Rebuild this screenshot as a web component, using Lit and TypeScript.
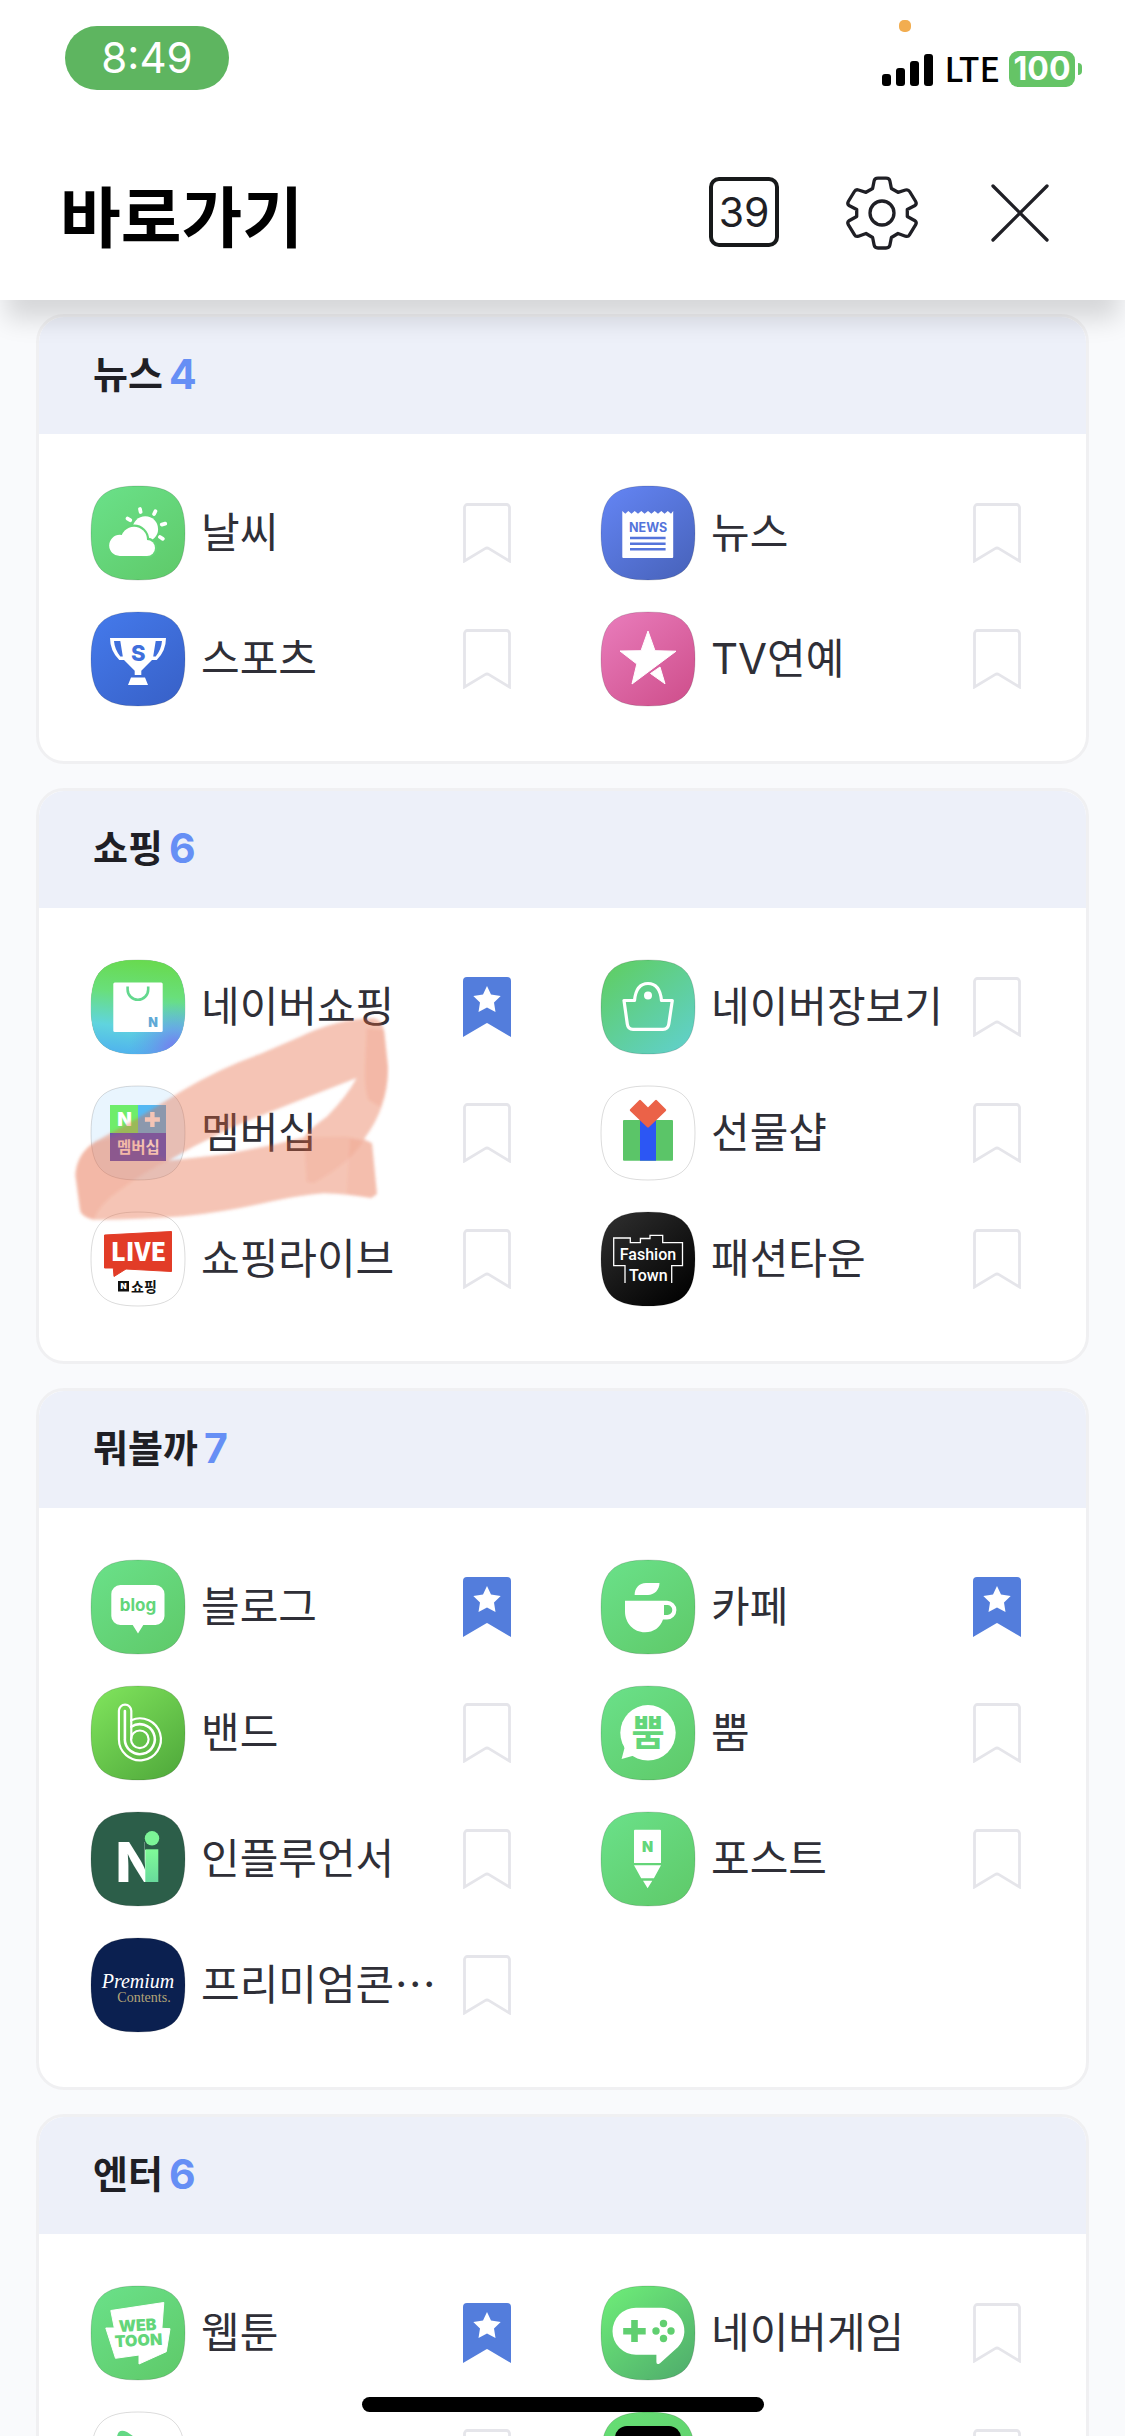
import { LitElement, html, svg, css, nothing, TemplateResult } from "lit";
import { customElement, property, state } from "lit/decorators.js";
import { classMap } from "lit/directives/class-map.js";

const SQUIRCLE = "M48 1C83 1 95 13 95 48S83 95 48 95 1 83 1 48 13 1 48 1Z";
const LEAF: [string, string] = ["#6ae088", "#5fca6a"];

interface Tile {
  colors: [string, string];
  art: TemplateResult;
}

/* Artwork of every service tile, drawn on a 96 x 96 grid. */
const TILES: Record<string, Tile> = {
  weather: {
    colors: LEAF,
    art: svg`
      <circle cx="55.3" cy="44" r="12.8" fill="#fff" />
      <g fill="#65d678">
        <circle cx="44" cy="54.8" r="15.2" />
        <circle cx="57" cy="62.8" r="10.2" />
      </g>
      <g fill="#fff">
        <circle cx="29.8" cy="60.4" r="10.6" />
        <circle cx="44" cy="54.8" r="13" />
        <circle cx="57" cy="63" r="8" />
        <rect x="29.8" y="58" width="27.2" height="13" />
      </g>
      <path d="M50 24l.6 3M65.4 26.3l-1.3 2.7M71.8 39.6l3.4-.9M70 52l2.8 1.8M37.6 33.6l2.6 1.6"
        stroke="#fff" stroke-width="3.8" stroke-linecap="round" />`,
  },
  news: {
    colors: ["#6384f3", "#4863bb"],
    art: svg`
      <path d="M22.3 26l3 2.8 3-2.8 3.2 2.8 3.2-2.8 3.3 2.8 3.3-2.8 3.3 2.8 3.4-2.8 3.4 2.8 3.3-2.8 3.3 2.8 3.3-2.8 3.3 2.8 3.2-2.8 3.2 2.8 2.2-2.8V72a1 1 0 0 1-1 1H23.3a1 1 0 0 1-1-1Z" fill="#fff" />
      <text class="sans" x="48.2" y="47.3" font-size="12.5" font-weight="700" fill="#5474db">NEWS</text>
      <path d="M30 53h35.6M30 58.7h35.6M30 64.3h35.6" stroke="#5474db" stroke-width="2.5" />`,
  },
  sports: {
    colors: ["#4479ea", "#3861c8"],
    art: svg`
      <path d="M20 27H76Q76 40 66.7 49H62L51.3 59.7V64H44.7V59.7L34 49H29.3Q20 40 20 27Z" fill="#fff" />
      <path d="M41 66.500H55L58 74H38Z" fill="#fff" />
      <path d="M24 30h6.300l2.500 15.500h-2.500Q24.500 38 24 30ZM72 30h-6.300l-2.500 15.500h2.500Q71.500 38 72 30Z" fill="#3f6fdc" />
      <text class="sans" x="48.3" y="49.5" font-size="22" font-weight="800" fill="#3f6fdc">S</text>`,
  },
  tv: {
    colors: ["#e87bba", "#cf4f8c"],
    art: svg`
      <path d="M48 20L55 39.7 76 40.2 32 73 36.8 53 20 40 41 39.7Z" fill="#fff" stroke="#fff" stroke-linejoin="round" />
      <path d="M50.500 62.500L60 56 65 72.800Z" fill="#fff" stroke="#fff" stroke-linejoin="round" />`,
  },
  shopping: {
    colors: ["#68da50", "#52a6e6"],
    art: svg`
      <defs>
        <linearGradient id="sky" x1="0.4" y1="0" x2="0.3" y2="1">
          <stop offset="0" stop-color="#68da50" /><stop offset=".34" stop-color="#69df7a" />
          <stop offset=".7" stop-color="#60d4de" /><stop offset="1" stop-color="#4fb2ee" />
        </linearGradient>
        <radialGradient id="violet" cx=".9" cy=".95" r=".5">
          <stop offset="0" stop-color="#7a78f0" /><stop offset="1" stop-color="#5a9be8" stop-opacity="0" />
        </radialGradient>
      </defs>
      <path d=${SQUIRCLE} fill="url(#sky)" /><path d=${SQUIRCLE} fill="url(#violet)" />
      <rect x="23.3" y="23.5" width="49.4" height="49.5" rx="1.5" fill="#fff" />
      <path d="M37.6 27.5v3a10.3 10.3 0 0 0 20.6 0v-3" fill="none" stroke="#63d88e" stroke-width="2.6" />
      <text class="sans" x="63" y="68.3" font-size="12.5" font-weight="900" fill="#5fa9d6">N</text>`,
  },
  market: {
    colors: ["#5fce62", "#60d0cc"],
    art: svg`
      <path d="M24 41.5H34.5C35.5 31 40 24.5 48 24.5S60.5 31 61.5 41.5H72.3L68.8 65Q68 70.3 63 70.3H33Q28 70.3 27.3 65Z"
        fill="none" stroke="#fff" stroke-width="3.2" stroke-linejoin="round" />
      <circle cx="48" cy="36.5" r="4" fill="#fff" />`,
  },
  membership: {
    colors: ["#e9f5fe", "#e9f5fe"],
    art: svg`
      <rect x="20" y="20" width="28" height="28" fill="#6eed6b" />
      <rect x="48" y="20" width="28" height="28" fill="#55b8f3" />
      <rect x="20" y="48" width="56" height="28" fill="#4350d2" />
      <text class="sans" x="34.5" y="41" font-size="19" font-weight="900" fill="#fff">N</text>
      <path d="M62.4 27v15M54.9 34.5h15" stroke="#fff" stroke-width="4.4" />
      <text class="kr" x="48.3" y="67.5" font-size="15.5" font-weight="700" fill="#fff">멤버십</text>`,
  },
  gift: {
    colors: ["#ffffff", "#ffffff"],
    art: svg`
      <rect x="23" y="35" width="50" height="40.7" rx="1" fill="#5bc568" />
      <rect x="40" y="35" width="16" height="40.7" fill="#2c56f4" />
      <path d="M40 16L31 25.2 48 41.3 65 25.2 56 16 48 24Z" fill="#eb6248" stroke="#eb6248" stroke-width="2.4" stroke-linejoin="round" />`,
  },
  live: {
    colors: ["#ffffff", "#ffffff"],
    art: svg`
      <path d="M14.5 24L81.5 20.5V60.5L36 58 24 65.500 23.300 57H14.500Z" fill="#e23c27" stroke="#e23c27" stroke-linejoin="round" />
      <text class="kr" x="48.5" y="50.3" font-size="25" font-weight="900" fill="#fff">LIVE</text>
      <rect x="28" y="70" width="11" height="10.5" fill="#111" />
      <text class="sans" x="33.5" y="78.3" font-size="8" font-weight="900" fill="#fff">N</text>
      <text class="kr" x="54" y="80.5" font-size="14" font-weight="700" fill="#111">쇼핑</text>`,
  },
  fashion: {
    colors: ["#2e2e2e", "#000000"],
    art: svg`
      <path d="M25 72V54.7H13.7V27H30.3V31.7H40.4V27.5H50V24.3H62.7V31.7H82.5V54.7H71.7V72" fill="none" stroke="#fff" stroke-width="1.3" />
      <text class="poster" x="48" y="49" font-size="16" font-weight="500" fill="#fff">Fashion</text>
      <text class="poster" x="48.3" y="70" font-size="16" font-weight="500" fill="#fff">Town</text>`,
  },
  blog: {
    colors: LEAF,
    art: svg`
      <path d="M30 26H65.5A9 9 0 0 1 74.5 35V57A9 9 0 0 1 65.5 66H53.3L48 74.5 42.7 66H30.3A9 9 0 0 1 21.3 57V35A9 9 0 0 1 30.3 26Z" fill="#fff" />
      <text class="sans" x="48" y="51.7" font-size="17" font-weight="700" fill="#63d67a">blog</text>`,
  },
  cafe: {
    colors: LEAF,
    art: svg`
      <path d="M34.6 36C34.6 29 39 24 46 24H59.5C59.5 31 54 36 48 36Z" fill="#fff" />
      <path fill-rule="evenodd" d="M25 41.7H67A9.4 9.4 0 0 1 67 60.5H63C60.5 68.5 53.5 73.3 45 73.3 33.5 73.3 25 64 25 52.5ZM64 46V56H67.3A5 5 0 0 0 67.3 46Z" fill="#fff" />`,
  },
  band: {
    colors: ["#7fe35c", "#50a93b"],
    art: svg`
      <g fill="none" stroke="#fff" stroke-width="2.2" stroke-linecap="round">
        <path d="M28.9 54.3V25.8a6.2 6.2 0 0 1 12.4 0V35.2A21 21 0 1 1 28.9 54.3" />
        <path d="M41.3 35V54" />
        <path d="M34.9 54.3V26M41.3 41.8A15 15 0 1 1 34.8 54.3" stroke-width="2.6" />
        <circle cx="49.8" cy="54.3" r="8.8" />
      </g>`,
  },
  bbum: {
    colors: LEAF,
    art: svg`
      <circle cx="48" cy="47.8" r="27.7" fill="#fff" />
      <path d="M24 60L24.5 63 21.6 74 34 70.5 40 66Z" fill="#fff" />
      <text class="kr" x="48" y="60.5" font-size="36" font-weight="700" fill="#63d67a">뿜</text>`,
  },
  influencer: {
    colors: ["#2c5e49", "#2c5e49"],
    art: svg`
      <defs>
        <linearGradient id="mint" x1="0" y1="0" x2="0" y2="1">
          <stop offset="0" stop-color="#80fb98" /><stop offset="1" stop-color="#68da9c" />
        </linearGradient>
      </defs>
      <text class="sans start" x="25.5" y="71" font-size="55" font-weight="800" fill="#fff">N</text>
      <rect x="55" y="30" width="15" height="9" fill="#2c5e49" />
      <rect x="68" y="30" width="4" height="42" fill="#2c5e49" />
      <rect x="55.3" y="38.3" width="13" height="32.7" fill="url(#mint)" />
      <circle cx="62" cy="27.3" r="7.2" fill="#7cf497" />`,
  },
  post: {
    colors: LEAF,
    art: svg`
      <path d="M35 18.7H60a1 1 0 0 1 1 1V52H34V19.7a1 1 0 0 1 1-1ZM34 54.3H61L53.9 67.3H41.2ZM43 69.8H52.3L47.6 77.3Z" fill="#fff" />
      <text class="sans" x="47.7" y="41" font-size="14.5" font-weight="900" fill="#63d67a">N</text>`,
  },
  premium: {
    colors: ["#0b2050", "#0b2050"],
    art: svg`
      <text class="serif" x="48" y="51" font-size="20" font-style="italic" fill="#fff">Premium</text>
      <text class="serif" x="54" y="65" font-size="14" fill="#b3a577">Contents.</text>`,
  },
  webtoon: {
    colors: LEAF,
    art: svg`
      <path d="M20.8 25.5L73.8 17.5 71.9 43.3 80 43.7 76.3 66.7 49 79V70L25.5 73.3 15.8 43H24.3Z" fill="#fff" stroke="#fff" stroke-linejoin="round" />
      <g transform="rotate(-3 48 48)" fill="#63d67a" font-weight="900">
        <text class="sans" x="48" y="46" font-size="16">WEB</text>
        <text class="sans" x="48" y="61" font-size="16">TOON</text>
      </g>`,
  },
  game: {
    colors: ["#6dec78", "#50ad6c"],
    art: svg`
      <path d="M36 22.7H61A23.3 23.3 0 0 1 78 62L60 78.2Q56.4 80.5 56.4 77V69.7H36A23.5 23.5 0 0 1 36 22.7Z" fill="#fff" />
      <path d="M34.5 35v22M23.2 46.2h22.5" stroke="#60cf70" stroke-width="6.6" />
      <g fill="#60cf70">
        <circle cx="63.5" cy="38.5" r="3.7" /><circle cx="56" cy="46" r="3.7" />
        <circle cx="71" cy="46" r="3.7" /><circle cx="63.5" cy="53.5" r="3.7" />
      </g>`,
  },
  play: {
    colors: ["#ffffff", "#ffffff"],
    art: svg`<path d="M27 40V26Q28 17 37 21L68 42Q74 48 68 54L40 74Q28 78 27 68Z" fill="#63d884" />`,
  },
  box: {
    colors: ["#66de74", "#5fce6c"],
    art: svg`<rect x="15" y="15" width="66" height="64" rx="12" fill="#000" />`,
  },
};

interface Service {
  tile: string;
  name?: string;
  latin?: boolean;
  saved?: boolean;
}
interface Group {
  title: string;
  count: number;
  marked?: boolean;
  services: Service[];
}

const GROUPS: Group[] = [
  {
    title: "뉴스",
    count: 4,
    services: [
      { tile: "weather", name: "날씨" },
      { tile: "news", name: "뉴스" },
      { tile: "sports", name: "스포츠" },
      { tile: "tv", name: "TV연예", latin: true },
    ],
  },
  {
    title: "쇼핑",
    count: 6,
    marked: true,
    services: [
      { tile: "shopping", name: "네이버쇼핑", saved: true },
      { tile: "market", name: "네이버장보기" },
      { tile: "membership", name: "멤버십" },
      { tile: "gift", name: "선물샵" },
      { tile: "live", name: "쇼핑라이브" },
      { tile: "fashion", name: "패션타운" },
    ],
  },
  {
    title: "뭐볼까",
    count: 7,
    services: [
      { tile: "blog", name: "블로그", saved: true },
      { tile: "cafe", name: "카페", saved: true },
      { tile: "band", name: "밴드" },
      { tile: "bbum", name: "뿜" },
      { tile: "influencer", name: "인플루언서" },
      { tile: "post", name: "포스트" },
      { tile: "premium", name: "프리미엄콘…" },
    ],
  },
  {
    title: "엔터",
    count: 6,
    services: [
      { tile: "webtoon", name: "웹툰", saved: true },
      { tile: "game", name: "네이버게임" },
      { tile: "play" },
      { tile: "box" },
    ],
  },
];

@customElement("service-tile")
class ServiceTile extends LitElement {
  @property() name = "";

  static styles = css`
    :host { display: block; flex: none; width: 96px; height: 96px; }
    .art { display: block; width: 100%; height: 100%; }
    text { text-anchor: middle; }
    .start { text-anchor: start; }
    .sans { font-family: Inter, "Liberation Sans", sans-serif; }
    .kr { font-family: "Noto Sans CJK KR", sans-serif; }
    .poster { font-family: Roboto, "Liberation Sans", sans-serif; }
    .serif { font-family: "Liberation Serif", serif; }
  `;

  render() {
    const tile = TILES[this.name];
    if (!tile) return nothing;
    return html`
      <svg class="art" viewBox="0 0 96 96" aria-hidden="true">
        <defs>
          <linearGradient id="base" x1="0.1" y1="0" x2="0.9" y2="1">
            <stop offset="0" stop-color=${tile.colors[0]} />
            <stop offset="1" stop-color=${tile.colors[1]} />
          </linearGradient>
        </defs>
        <path d=${SQUIRCLE} fill="url(#base)" stroke="#000" stroke-opacity=".14" />
        ${tile.art}
      </svg>
    `;
  }
}

@customElement("service-item")
class ServiceItem extends LitElement {
  @property({ attribute: false }) service!: Service;
  @state() private saved = false;

  static styles = css`
    :host { display: flex; align-items: center; justify-content: space-between; min-width: 0; }
    .link { display: flex; align-items: center; gap: 15px; min-width: 0; color: #2f2f37; text-decoration: none; }
    .name {
      padding-bottom: 6px;
      font: 400 42px/60px "Noto Sans CJK KR", sans-serif;
      white-space: nowrap;
    }
    .latin { padding-bottom: 0; font-family: Inter, "Noto Sans CJK KR", sans-serif; }
    .save { flex: none; padding: 0; border: 0; background: none; cursor: pointer; }
    .ribbon { display: block; width: 48px; height: 60px; }
  `;

  willUpdate(changed: Map<string, unknown>) {
    if (changed.has("service")) this.saved = !!this.service.saved;
  }

  render() {
    const { tile, name, latin } = this.service;
    return html`
      <a class="link" href="#${tile}">
        <service-tile name=${tile}></service-tile>
        ${name ? html`<span class=${classMap({ name: true, latin: !!latin })}>${name}</span>` : nothing}
      </a>
      <button class="save" type="button" aria-label="즐겨찾기" aria-pressed=${this.saved}
        @click=${() => (this.saved = !this.saved)}>
        <svg class="ribbon" viewBox="0 0 48 60" aria-hidden="true">
          ${this.saved
            ? svg`
              <path d="M0 60V4a4 4 0 0 1 4-4H44a4 4 0 0 1 4 4V60L25 46.4q-1-.6-2 0Z" fill="#537ddc" />
              <path d="M24 9L28 17.5 37.7 19 31 25.5 32.5 35 24 30.5 15.5 35 17 25.5 10.3 19 20 17.5Z" fill="#fff" />`
            : svg`<path d="M1.5 58V4.5a3 3 0 0 1 3-3H43.5a3 3 0 0 1 3 3V58L26 45.6q-2-1.2-4 0Z"
                fill="none" stroke="#e5e5ea" stroke-width="2.8" />`}
        </svg>
      </button>
    `;
  }
}

@customElement("service-group")
class ServiceGroup extends LitElement {
  @property({ attribute: false }) group!: Group;

  static styles = css`
    :host { display: block; }
    .card {
      position: relative;
      border: 3px solid #f0f0f2;
      border-radius: 28px;
      background: #fff;
    }
    .head {
      display: flex;
      align-items: center;
      gap: 6px;
      height: 117px;
      padding-left: 54px;
      border-radius: 25px 25px 0 0;
      background: #edf0f9;
    }
    .title { margin: 0; padding-bottom: 8px; color: #1f1f25; font: 700 38px/56px "Noto Sans CJK KR", sans-serif; }
    .count { padding-bottom: 4px; color: #668ff5; font: 700 41px/56px Inter, sans-serif; }
    .grid {
      display: grid;
      grid-template-columns: 1fr 1fr;
      gap: 30px 89px;
      margin: 0;
      padding: 51px 65px 54px 51px;
      list-style: none;
    }
    .cell { min-width: 0; }
    .marker {
      position: absolute;
      left: 31px;
      top: 219px;
      width: 320px;
      height: 220px;
      pointer-events: none;
    }
  `;

  private marker() {
    return html`
      <svg class="marker" viewBox="30 270 960 660" aria-hidden="true">
        <defs><filter id="soft"><feGaussianBlur stdDeviation="4" /></filter></defs>
        <g fill="#e5623c" filter="url(#soft)">
          <path fill-opacity=".375" fill-rule="evenodd" d="M46 765Q50 700 105 665L240 590 370 510Q480 445 600 402L720 350Q830 297 940 294 970 300 974 345L984 440Q986 560 912 657L936 670 943 740 951 822 934 834Q860 822 790 820 720 826 640 843 500 875 370 889 220 900 100 899 65 893 60 870ZM890 474L700 548 520 620 400 680 325 722 500 702 640 674 732 652Q742 632 800 590 860 530 890 474Z" />
          <path fill-opacity=".12" d="M46 765Q50 700 105 668L200 640Q270 700 325 722 260 750 180 810 120 850 100 899L62 880Z" />
          <path fill-opacity=".12" d="M920 325L972 330 984 440Q986 500 960 560L925 540Q912 500 915 440Z" />
          <path fill-opacity=".1" d="M732 652L860 650 912 660Q870 730 760 790L740 785Z" />
          <path fill-opacity=".08" d="M870 655L936 670 951 822 934 834 860 822Z" />
        </g>
      </svg>
    `;
  }

  render() {
    const { title, count, services, marked } = this.group;
    return html`
      <section class="card">
        <header class="head">
          <h2 class="title">${title}</h2>
          <span class="count">${count}</span>
        </header>
        <ul class="grid">
          ${services.map((s) => html`<li class="cell"><service-item .service=${s}></service-item></li>`)}
        </ul>
        ${marked ? this.marker() : nothing}
      </section>
    `;
  }
}

@customElement("app-root")
class AppRoot extends LitElement {
  static styles = css`
    :host {
      display: flex;
      flex-direction: column;
      position: relative;
      height: 100vh;
      overflow: hidden;
      background: #f9fafc;
      font-family: Inter, "Noto Sans CJK KR", sans-serif;
    }
    .top {
      position: relative;
      z-index: 1;
      flex: none;
      background: #fff;
      box-shadow: 0 25px 24px -6px rgba(0, 0, 0, 0.14);
    }
    .status {
      display: flex;
      justify-content: space-between;
      align-items: flex-start;
      height: 124px;
      padding: 0 43px 0 65px;
      box-sizing: border-box;
    }
    .clock {
      margin-top: 26px;
      width: 164px;
      border-radius: 32px;
      background: #5eb560;
      color: #fff;
      font-size: 42px;
      line-height: 64px;
      text-align: center;
    }
    .system { display: flex; flex-direction: column; gap: 19px; padding-top: 20px; }
    .mic { width: 12px; height: 12px; margin-left: 17px; border-radius: 5px; background: #f2ad50; }
    .signals { display: flex; align-items: center; height: 36px; }
    .bars { width: 51px; height: 33px; margin-right: 11px; }
    .network { margin-right: 9px; padding-bottom: 2px; font: 500 34px/36px "Noto Sans CJK KR", sans-serif; }
    .battery {
      width: 66px;
      border-radius: 9px;
      background: #65c466;
      color: #fff;
      font-size: 32px;
      font-weight: 700;
      line-height: 36px;
      text-align: center;
    }
    .nub { width: 4px; height: 12px; margin-left: 3px; border-radius: 0 4px 4px 0; background: #65c466; }
    .bar {
      display: flex;
      align-items: center;
      justify-content: space-between;
      height: 176px;
      padding: 0 69px 0 60px;
    }
    .heading { margin: 0; padding-top: 2px; color: #000; font: 700 66px/96px "Noto Sans CJK KR", sans-serif; }
    .tools { display: flex; gap: 66px; }
    .tool { display: block; width: 72px; height: 72px; padding: 0; border: 0; background: none; color: #1f1f25; cursor: pointer; }
    .glyph { display: block; width: 72px; height: 74px; overflow: visible; }
    .badge {
      width: 70px;
      height: 70px;
      margin: 1px;
      box-sizing: border-box;
      border: 4px solid #17191a;
      border-radius: 10px;
      font: 400 41px/62px Inter, sans-serif;
      text-align: center;
    }
    .list {
      flex: 1;
      min-height: 0;
      overflow-y: auto;
      scrollbar-width: none;
      display: flex;
      flex-direction: column;
      gap: 24px;
      padding: 14px 36px 0;
    }
    .group { flex: none; }
    .home {
      position: absolute;
      left: 50%;
      bottom: 24px;
      width: 402px;
      height: 15px;
      margin-left: -201px;
      border-radius: 8px;
      background: #000;
    }
  `;

  render() {
    return html`
      <div class="top">
        <div class="status">
          <div class="clock">8:49</div>
          <div class="system">
            <div class="mic"></div>
            <div class="signals">
              <svg class="bars" viewBox="0 0 51 33" aria-hidden="true">
                <rect x="0" y="21" width="9" height="12" rx="3" />
                <rect x="14" y="15" width="9" height="18" rx="3" />
                <rect x="28" y="8" width="9" height="25" rx="3" />
                <rect x="42" y="1" width="9" height="32" rx="3" />
              </svg>
              <span class="network">LTE</span>
              <span class="battery">100</span>
              <span class="nub"></span>
            </div>
          </div>
        </div>
        <header class="bar">
          <h1 class="heading">바로가기</h1>
          <div class="tools">
            <button class="tool" type="button"><div class="badge">39</div></button>
            <button class="tool" type="button" aria-label="설정">
              <svg class="glyph" viewBox="0 0 72 74" fill="none" stroke="currentColor" stroke-width="3.3" stroke-linejoin="round" aria-hidden="true">
                <path d="M32 2.2H40Q43.3 2.2 43.9 5L45.4 12.5 52 16.3 59.5 14Q62.3 13.2 63.6 15.5L69.7 25.5Q71 27.7 69 29.5L61.3 33.5V40.5L69 44.8Q71 46.5 69.7 48.7L63.6 58.7Q62.3 61 59.5 60.2L52 57.5 45.4 61.5 43.9 69Q43.3 72 40 72H32Q28.7 72 28.1 69L26.6 61.5 20 57.5 12.5 60.2Q9.7 61 8.4 58.7L2.3 48.7Q1 46.5 3 44.8L10.7 40.5V33.5L3 29.5Q1 27.7 2.3 25.5L8.4 15.5Q9.7 13.2 12.5 14L20 16.3 26.6 12.5 28.1 5Q28.7 2.2 32 2.2Z" />
                <circle cx="36" cy="37" r="12" />
              </svg>
            </button>
            <button class="tool" type="button" aria-label="닫기">
              <svg class="glyph" viewBox="0 0 72 74" fill="none" stroke="currentColor" stroke-width="3.3" stroke-linecap="round" aria-hidden="true">
                <path d="M9 10L63 64M63 10L9 64" />
              </svg>
            </button>
          </div>
        </header>
      </div>
      <main class="list">
        ${GROUPS.map((g) => html`<service-group class="group" .group=${g}></service-group>`)}
      </main>
      <div class="home"></div>
    `;
  }
}
